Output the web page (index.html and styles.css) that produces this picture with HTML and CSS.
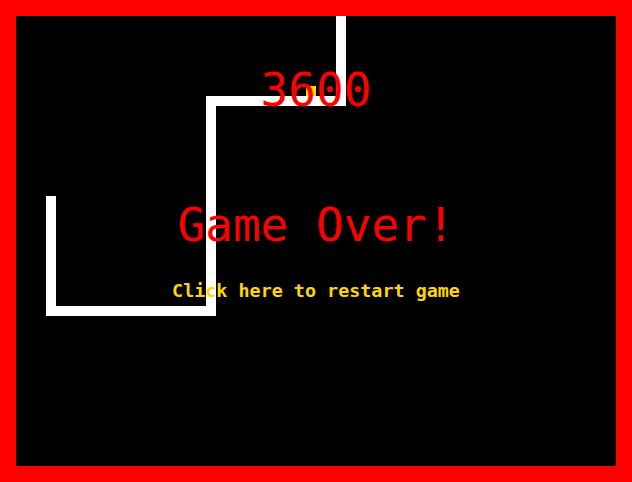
FILE: index.html
```html
<!DOCTYPE html>
<html lang="en">
<head>
  <meta charset="UTF-8" />
  <title>Snake</title>
  <meta name="viewport" content="width=device-width, initial-scale=1" />
  <link rel="stylesheet" href="styles.css">
</head>
<body>
  <div class="board">
    <svg class="field" width="600" height="450" viewBox="0 0 600 450">
      <!-- food -->
      <rect x="290" y="70" width="10" height="10" fill="#ffd700" />
      <!-- snake body, head at the top -->
      <g fill="#fff">
        <rect x="320" y="0" width="10" height="90" />
        <rect x="190" y="80" width="140" height="10" />
        <rect x="190" y="80" width="10" height="220" />
        <rect x="30" y="290" width="170" height="10" />
        <rect x="30" y="180" width="10" height="120" />
      </g>
    </svg>
    <div class="score">3600</div>
    <div class="game-over">Game Over!</div>
    <a href="#" class="restart">Click here to restart game</a>
  </div>
</body>
</html>
```

FILE: styles.css
```css
body {
  margin: 0;
  background-color: #ff0000;
  font-family: "DejaVu Sans Mono", monospace;
}

.board {
  position: relative;
  width: 600px;
  height: 450px;
  border: 16px solid #ff0000;
  background-color: #000;
}

.field {
  display: block;
}

.score,
.game-over,
.restart {
  position: absolute;
  left: 0;
  right: 0;
  text-align: center;
  line-height: 1;
}

.score {
  top: 51px;
  font-size: 46px;
  color: #ff0000;
}

.game-over {
  top: 186px;
  font-size: 46px;
  color: #ff0000;
}

.restart {
  top: 266px;
  font-size: 18.4px;
  font-weight: bold;
  color: #ffd700;
  text-decoration: none;
}
```
